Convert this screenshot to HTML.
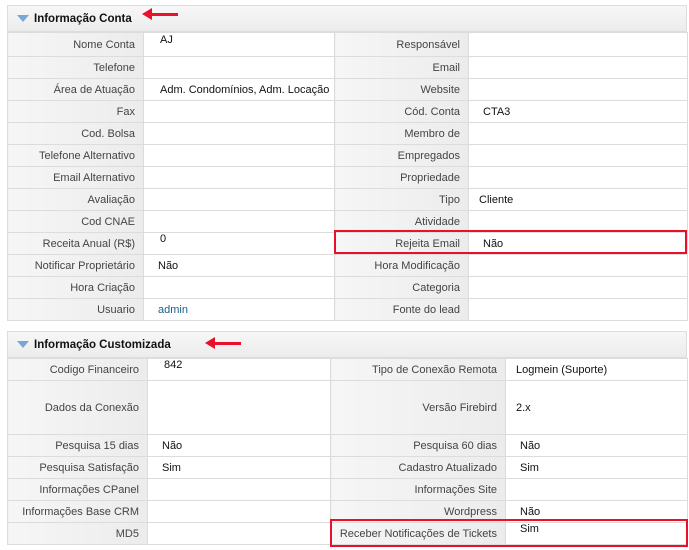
<!DOCTYPE html>
<html><head><meta charset="utf-8"><style>
body{margin:0;width:689px;height:550px;background:#fff;font-family:"Liberation Sans",Arial,sans-serif;font-size:11px;color:#333;position:relative;overflow:hidden}
.hdr{position:absolute;left:7px;width:680px;height:27px;background:linear-gradient(#f7f7f7,#ececec);border:1px solid #ddd;box-sizing:border-box;font-weight:bold;color:#111;font-size:11.5px;line-height:26px;padding-left:26px}
.tri{position:absolute;left:9px;top:9px;width:0;height:0;border-left:6px solid transparent;border-right:6px solid transparent;border-top:7px solid #7aa6d6}
table{position:absolute;left:7px;width:680px;border-collapse:collapse;table-layout:fixed}
td{border:1px solid #dcdcdc;padding:0 8px;height:21px;white-space:nowrap;overflow:hidden}
td.l{background:linear-gradient(90deg,#f6f6f6,#ececec);text-align:right;color:#444}
td.v{background:#fff;padding-left:14px;color:#111}
.red{position:absolute;border:2px solid #e8102a;box-sizing:border-box}
.arr{position:absolute;height:3px;background:#e8102a}
.arr:before{content:"";position:absolute;left:-9px;top:-5px;border-right:10px solid #e8102a;border-top:6.5px solid transparent;border-bottom:6.5px solid transparent}
a{color:#1a5f8a;text-decoration:none}
</style></head><body>
<div class="hdr" style="top:5px"><span class="tri"></span>Informação Conta</div>
<div class="arr" style="left:151px;top:13px;width:27px"></div>
<table style="top:32px">
<colgroup><col style="width:136px"><col style="width:191px"><col style="width:134px"><col style="width:219px"></colgroup>
<tr style="height:23px"><td class="l" style="height:23px">Nome Conta</td><td class="v" style="vertical-align:top;padding-top:1px;padding-left:16px">AJ</td><td class="l">Responsável</td><td class="v"></td></tr>
<tr><td class="l">Telefone</td><td class="v"></td><td class="l">Email</td><td class="v"></td></tr>
<tr><td class="l">Área de Atuação</td><td class="v" style="padding-left:16px">Adm. Condomínios, Adm. Locação</td><td class="l">Website</td><td class="v"></td></tr>
<tr><td class="l">Fax</td><td class="v"></td><td class="l">Cód. Conta</td><td class="v">CTA3</td></tr>
<tr><td class="l">Cod. Bolsa</td><td class="v"></td><td class="l">Membro de</td><td class="v"></td></tr>
<tr><td class="l">Telefone Alternativo</td><td class="v"></td><td class="l">Empregados</td><td class="v"></td></tr>
<tr><td class="l">Email Alternativo</td><td class="v"></td><td class="l">Propriedade</td><td class="v"></td></tr>
<tr><td class="l">Avaliação</td><td class="v"></td><td class="l">Tipo</td><td class="v" style="padding-left:10px">Cliente</td></tr>
<tr><td class="l">Cod CNAE</td><td class="v"></td><td class="l">Atividade</td><td class="v"></td></tr>
<tr><td class="l">Receita Anual (R$)</td><td class="v" style="vertical-align:top;padding-left:16px">0</td><td class="l">Rejeita Email</td><td class="v">Não</td></tr>
<tr><td class="l">Notificar Proprietário</td><td class="v">Não</td><td class="l">Hora Modificação</td><td class="v"></td></tr>
<tr><td class="l">Hora Criação</td><td class="v"></td><td class="l">Categoria</td><td class="v"></td></tr>
<tr><td class="l">Usuario</td><td class="v"><a>admin</a></td><td class="l">Fonte do lead</td><td class="v"></td></tr>
</table>
<div class="red" style="left:334px;top:230px;width:353px;height:24px"></div>

<div class="hdr" style="top:331px"><span class="tri"></span>Informação Customizada</div>
<div class="arr" style="left:214px;top:342px;width:27px"></div>
<table style="top:358px">
<colgroup><col style="width:140px"><col style="width:183px"><col style="width:175px"><col style="width:182px"></colgroup>
<tr><td class="l">Codigo Financeiro</td><td class="v" style="vertical-align:top;padding-left:16px">842</td><td class="l">Tipo de Conexão Remota</td><td class="v" style="padding-left:10px">Logmein (Suporte)</td></tr>
<tr style="height:54px"><td class="l">Dados da Conexão</td><td class="v"></td><td class="l">Versão Firebird</td><td class="v" style="padding-left:10px">2.x</td></tr>
<tr><td class="l">Pesquisa 15 dias</td><td class="v">Não</td><td class="l">Pesquisa 60 dias</td><td class="v">Não</td></tr>
<tr><td class="l">Pesquisa Satisfação</td><td class="v">Sim</td><td class="l">Cadastro Atualizado</td><td class="v">Sim</td></tr>
<tr><td class="l">Informações CPanel</td><td class="v"></td><td class="l">Informações Site</td><td class="v"></td></tr>
<tr><td class="l">Informações Base CRM</td><td class="v"></td><td class="l">Wordpress</td><td class="v">Não</td></tr>
<tr><td class="l">MD5</td><td class="v"></td><td class="l">Receber Notificações de Tickets</td><td class="v" style="vertical-align:top">Sim</td></tr>
</table>
<div class="red" style="left:330px;top:519px;width:358px;height:28px"></div>
</body></html>
